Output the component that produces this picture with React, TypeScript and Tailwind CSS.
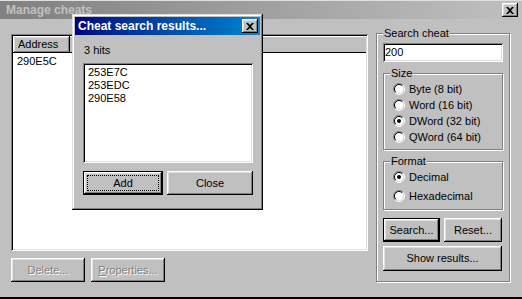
import type { ReactNode } from "react";

const raised =
  "shadow-[inset_-1px_-1px_#000,inset_1px_1px_#fff,inset_-2px_-2px_#808080,inset_2px_2px_#dfdfdf]";
const sunken =
  "shadow-[inset_1px_1px_#808080,inset_-1px_-1px_#fff,inset_2px_2px_#000,inset_-2px_-2px_#dfdfdf]";
const etched = "border border-[#808080] shadow-[inset_1px_1px_#fff,1px_1px_#fff]";

function XGlyph() {
  return (
    <svg width="8" height="7" viewBox="0 0 8 7">
      <polygon points="0,0 2,0 4,2 6,0 8,0 5,3.5 8,7 6,7 4,5 2,7 0,7 3,3.5" fill="#000" />
    </svg>
  );
}

function CloseBtn() {
  return (
    <div className={`w-[16px] h-[14px] bg-[#c0c0c0] flex items-center justify-center ${raised}`}>
      <XGlyph />
    </div>
  );
}

function Button({
  children,
  className = "",
  isDefault = false,
  focus = false,
  disabled = false,
}: {
  children: ReactNode;
  className?: string;
  isDefault?: boolean;
  focus?: boolean;
  disabled?: boolean;
}) {
  return (
    <div
      className={`relative flex items-center justify-center bg-[#c0c0c0] ${raised} ${
        isDefault ? "border border-black" : ""
      } ${className}`}
    >
      {focus && <div className="absolute inset-[3px] border border-dotted border-black" />}
      <span
        className={`leading-[13px] ${
          disabled ? "text-[#808080] [text-shadow:1px_1px_0_#fff]" : "text-black"
        }`}
      >
        {children}
      </span>
    </div>
  );
}

function Radio({ checked = false }: { checked?: boolean }) {
  return (
    <svg width="12" height="12" viewBox="0 0 12 12" className="shrink-0">
      <circle cx="6" cy="6" r="4.5" fill="#fff" />
      <path d="M2.1 9.9 A5.5 5.5 0 0 1 9.9 2.1" stroke="#808080" fill="none" />
      <path d="M9.9 2.1 A5.5 5.5 0 0 1 2.1 9.9" stroke="#fff" fill="none" />
      <path d="M2.8 9.2 A4.5 4.5 0 0 1 9.2 2.8" stroke="#000" fill="none" />
      <path d="M9.2 2.8 A4.5 4.5 0 0 1 2.8 9.2" stroke="#dfdfdf" fill="none" />
      {checked && <circle cx="6" cy="6" r="2" fill="#000" />}
    </svg>
  );
}

function Group({ label, children, className = "" }: { label: string; children: ReactNode; className?: string }) {
  return (
    <div className={`relative ${etched} ${className}`}>
      <span className="absolute -top-[7px] left-[6px] px-[1px] bg-[#c0c0c0] leading-[13px]">{label}</span>
      {children}
    </div>
  );
}

function RadioRow({ label, checked }: { label: string; checked?: boolean }) {
  return (
    <div className="h-[16px] flex items-center gap-[4px] pl-[9px]">
      <Radio checked={checked} />
      <span className="leading-[13px]">{label}</span>
    </div>
  );
}

export default function App() {
  return (
    <div className="relative w-[522px] h-[299px] overflow-hidden bg-[#c0c0c0] font-['Liberation_Sans',Arial,sans-serif] text-[11px] text-black border-t border-t-[#dfdfdf] border-b-2 border-b-black">
      {/* main title bar (inactive) */}
      <div className="h-[18px] mr-[2px] flex items-center justify-between pl-[6px] pr-[2px] bg-gradient-to-r from-[#808080] to-[#c0c0c0]">
        <span className="font-bold text-[12px] leading-none text-[#c0c0c0]">Manage cheats</span>
        <CloseBtn />
      </div>

      {/* body */}
      <div className="flex pl-[11px] pt-[14px] gap-[8px]">
        <div className="w-[357px] mt-px flex flex-col">
          <div className={`h-[217px] bg-white p-[2px] ${sunken}`}>
            <div className="h-[17px] flex bg-[#c0c0c0]">
              <div className={`w-[57px] h-full pl-[5px] flex items-center ${raised}`}>
                <span className="leading-[13px]">Address</span>
              </div>
              <div className="flex-1 h-full shadow-[inset_0_1px_#fff,inset_0_-1px_#000]" />
            </div>
            <div className="mt-[2px] pl-[4px] leading-[13px]">290E5C</div>
          </div>
          <div className="mt-[7px] flex gap-[6px]">
            <Button className="w-[74px] h-[24px]" disabled>
              Delete...
            </Button>
            <Button className="w-[74px] h-[24px]" disabled>
              <span className="underline">P</span>roperties...
            </Button>
          </div>
        </div>

        <Group label="Search cheat" className="w-[134px] h-[249px] pt-[9px] pl-[6px] pr-[6px]">
          <div className={`h-[19px] w-[120px] bg-white pl-[2px] flex items-center ${sunken}`}>
            <span className="leading-[13px]">200</span>
          </div>

          <Group label="Size" className="mt-[11px] w-[120px] pt-[7px] pb-[4px]">
            <RadioRow label="Byte (8 bit)" />
            <RadioRow label="Word (16 bit)" />
            <RadioRow label="DWord (32 bit)" checked />
            <RadioRow label="QWord (64 bit)" />
          </Group>

          <Group label="Format" className="mt-[11px] w-[120px] pt-[7px] pb-[5px] flex flex-col gap-[3px]">
            <RadioRow label="Decimal" checked />
            <RadioRow label="Hexadecimal" />
          </Group>

          <div className="mt-[8px] flex gap-[4px]">
            <Button className="w-[57px] h-[24px]" isDefault>
              Search...
            </Button>
            <Button className="w-[58px] h-[24px]">Reset...</Button>
          </div>
          <Button className="mt-[4px] w-[119px] h-[25px]">Show results...</Button>
        </Group>
      </div>

      {/* search results dialog */}
      <div className={`absolute left-[72px] top-[13px] w-[191px] h-[196px] bg-[#c0c0c0] p-[3px] shadow-[inset_-1px_-1px_#000,inset_1px_1px_#dfdfdf,inset_-2px_-2px_#808080,inset_2px_2px_#fff]`}>
        <div className="h-[18px] flex items-center justify-between pl-[3px] pr-[2px] bg-gradient-to-r from-[#000080] to-[#1084d0]">
          <span className="font-bold text-[12px] leading-none text-white">Cheat search results...</span>
          <CloseBtn />
        </div>
        <div className="pl-[8px] pr-[7px]">
          <div className="mt-[9px] pl-[1px] leading-[13px]">3 hits</div>
          <div className={`mt-[6px] h-[100px] bg-white pt-[3px] pl-[5px] ${sunken}`}>
            <div className="leading-[13px]">253E7C</div>
            <div className="leading-[13px]">253EDC</div>
            <div className="leading-[13px]">290E58</div>
          </div>
          <div className="mt-[8px] flex gap-[4px]">
            <Button className="w-[80px] h-[24px]" isDefault focus>
              Add
            </Button>
            <Button className="flex-1 h-[24px]">Close</Button>
          </div>
        </div>
      </div>
    </div>
  );
}
